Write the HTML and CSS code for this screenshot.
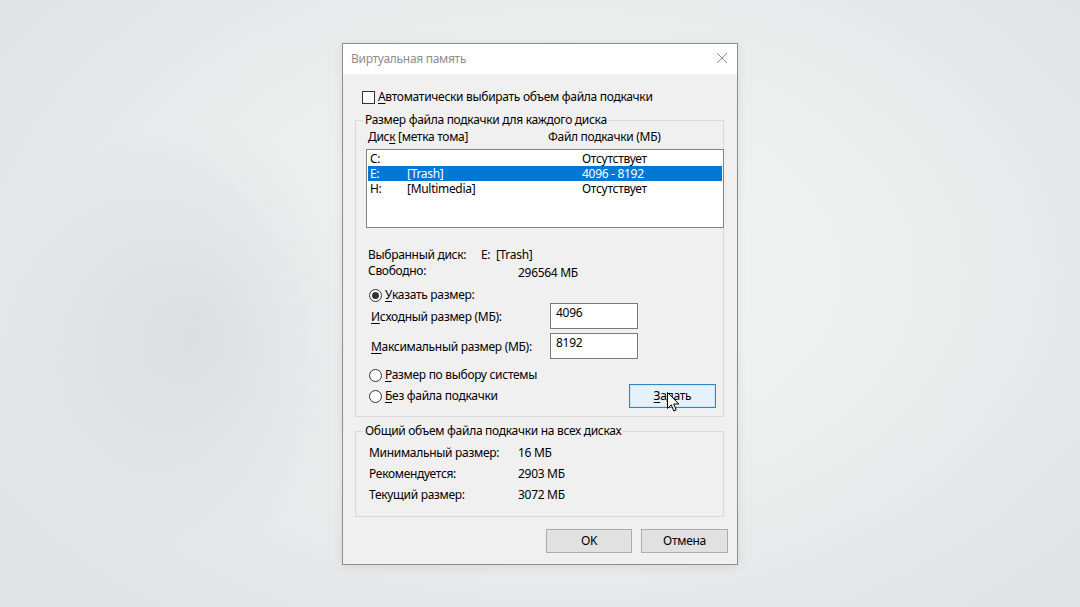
FILE: index.html
```html
<!DOCTYPE html>
<html lang="ru">
<head>
<meta charset="utf-8">
<title>Виртуальная память</title>
<link rel="stylesheet" href="styles.css">
</head>
<body>
<div class="stage">
  <div class="dialog">
    <div class="titlebar">
      <span class="title">Виртуальная память</span>
      <svg class="close" width="12" height="12" viewBox="0 0 12 12"><path d="M1 1 L11 11 M11 1 L1 11" stroke="#8c8c8c" stroke-width="1" fill="none"/></svg>
    </div>
    <div class="body">
      <div class="check-row">
        <span class="checkbox"></span>
        <span class="label"><u>А</u>втоматически выбирать объем файла подкачки</span>
      </div>

      <fieldset class="group group-disk">
        <legend>Размер файла подкачки для каждого диска</legend>
        <div class="col-head">
          <span class="ch1">Дис<u>к</u> [метка тома]</span>
          <span class="ch2">Файл подкачки (МБ)</span>
        </div>
        <div class="listbox">
          <div class="lrow"><span class="c1">C:</span><span class="c2"></span><span class="c3">Отсутствует</span></div>
          <div class="lrow sel"><span class="c1">E:</span><span class="c2">[Trash]</span><span class="c3">4096 - 8192</span></div>
          <div class="lrow"><span class="c1">H:</span><span class="c2">[Multimedia]</span><span class="c3">Отсутствует</span></div>
        </div>
        <div class="info info1">
          <span class="ilabel w1">Выбранный диск:</span><span>E:&nbsp; [Trash]</span>
        </div>
        <div class="info info2">
          <span class="ilabel w2">Свободно:</span><span class="free">296564 МБ</span>
        </div>
        <div class="radio-row r-custom">
          <span class="radio on"></span><span><u>У</u>казать размер:</span>
        </div>
        <div class="field-row f1">
          <span class="flabel"><u>И</u>сходный размер (МБ):</span>
          <div class="input">4096</div>
        </div>
        <div class="field-row f2">
          <span class="flabel"><u>М</u>аксимальный размер (МБ):</span>
          <div class="input">8192</div>
        </div>
        <div class="radio-row r-system">
          <span class="radio"></span><span><u>Р</u>азмер по выбору системы</span>
        </div>
        <div class="last-row">
          <div class="radio-row">
            <span class="radio"></span><span><u>Б</u>ез файла подкачки</span>
          </div>
          <div class="btn btn-set"><u>З</u>адать
            <svg class="cursor" width="13" height="21" viewBox="0 0 13 21"><path d="M0.5 0.5 L0.5 16.5 L4.3 12.8 L6.8 19 L9.2 18 L6.7 12 L11.8 12 Z" fill="#fff" stroke="#000" stroke-width="1" stroke-linejoin="miter"/></svg>
          </div>
        </div>
      </fieldset>

      <fieldset class="group group-total">
        <legend>Общий объем файла подкачки на всех дисках</legend>
        <div class="trow"><span class="tlabel">Минимальный размер:</span><span>16 МБ</span></div>
        <div class="trow"><span class="tlabel">Рекомендуется:</span><span>2903 МБ</span></div>
        <div class="trow"><span class="tlabel">Текущий размер:</span><span>3072 МБ</span></div>
      </fieldset>

      <div class="buttons">
        <div class="btn btn-ok">OK</div>
        <div class="btn btn-cancel">Отмена</div>
      </div>
    </div>
  </div>
</div>
</body>
</html>
```

FILE: styles.css
```css
html, body {
  margin: 0;
  padding: 0;
}
body {
  width: 1080px;
  height: 607px;
  overflow: hidden;
  background:
    radial-gradient(ellipse 18% 35% at 18% 55%, rgba(200,203,205,0.45) 0%, rgba(200,203,205,0) 100%),
    radial-gradient(ellipse 60% 70% at 52% 45%, #f5f6f6 0%, #eef0f0 45%, #e2e4e5 100%);
  font-family: "Noto Sans", "Open Sans", sans-serif;
  font-size: 12px;
  letter-spacing: -0.3px;
  color: #000;
}
.stage {
  display: flex;
  justify-content: center;
  padding-top: 43px;
}
.dialog {
  width: 394px;
  border: 1px solid #8d8d8d;
  background: #f0f0f0;
  box-shadow: 0 2px 10px rgba(0,0,0,0.08);
}
.titlebar {
  height: 30px;
  background: #fff;
  display: flex;
  align-items: center;
  justify-content: space-between;
  padding: 0 9px 0 8px;
}
.title {
  color: #8e8e8e;
  line-height: 16px;
}
.close {
  display: block;
  margin-top: -2px;
}
.body {
  height: 490px;
  box-sizing: border-box;
  padding: 15px 0 11px 0;
  display: flex;
  flex-direction: column;
}
u {
  text-decoration: underline;
  text-underline-offset: 2px;
  text-decoration-thickness: 1px;
}
.check-row {
  height: 16px;
  line-height: 16px;
  display: flex;
  align-items: center;
  padding-left: 19px;
}
.checkbox {
  width: 11px;
  height: 11px;
  border: 1px solid #333;
  background: #fff;
  margin-right: 3px;
}
.group {
  margin: 7px 0 0 12px;
  padding: 0;
  width: 369px;
  box-sizing: border-box;
  border: 1px solid #d9d9d9;
  min-width: 0;
}
.group legend {
  margin-left: 7px;
  padding: 0 2px;
  line-height: 16px;
  height: 16px;
}
.group-disk {
  padding-bottom: 8px;
}
.col-head {
  display: flex;
  margin-top: 1px;
  line-height: 16px;
  padding-left: 12px;
}
.ch1 { width: 180px; }
.listbox {
  margin: 4px 0 0 10px;
  width: 358px;
  height: 79px;
  box-sizing: border-box;
  border: 1px solid #828282;
  background: #fff;
  padding: 1px;
}
.lrow {
  display: flex;
  height: 15px;
  line-height: 15px;
}
.lrow .c1 { width: 37px; padding-left: 2px; }
.lrow .c2 { width: 175px; }
.lrow.sel {
  background: #0078d7;
  color: #fff;
}
.info {
  display: flex;
  padding-left: 12px;
  align-items: flex-start;
}
.info1 {
  margin-top: 19px;
  height: 16px;
  line-height: 16px;
}
.info2 {
  height: 15px;
  line-height: 15px;
}
.ilabel.w1 { width: 113px; }
.ilabel.w2 { width: 150px; }
.free { padding-top: 2px; }
.radio-row {
  display: flex;
  align-items: center;
  height: 16px;
  line-height: 16px;
  padding-left: 13px;
}
.radio {
  width: 11px;
  height: 11px;
  border: 1px solid #333;
  border-radius: 50%;
  background: #fff;
  margin-right: 3px;
  display: flex;
  align-items: center;
  justify-content: center;
}
.radio.on::after {
  content: "";
  width: 7px;
  height: 7px;
  border-radius: 50%;
  background: #333;
}
.r-custom { margin-top: 9px; }
.field-row {
  display: flex;
  align-items: center;
  height: 26px;
  padding-left: 15px;
}
.f2 { margin-top: 4px; }
.flabel {
  width: 179px;
  padding-top: 1px;
}
.input {
  width: 88px;
  height: 26px;
  box-sizing: border-box;
  border: 1px solid #7a7a7a;
  background: #fff;
  padding: 1px 5px;
  line-height: 16px;
}
.r-system { margin-top: 8px; }
.last-row {
  margin-top: 1px;
  height: 24px;
  display: flex;
  align-items: center;
  justify-content: space-between;
  padding-right: 7px;
}
.last-row .radio-row { padding-left: 13px; }
.btn {
  height: 24px;
  box-sizing: border-box;
  border: 1px solid #adadad;
  background: #e1e1e1;
  display: flex;
  align-items: center;
  justify-content: center;
  line-height: 16px;
}
.btn-set {
  position: relative;
  width: 87px;
  background: #e5f1fb;
  border: 1px solid #2f86c2;
  box-shadow: inset 0 0 0 1px #cfe6f6;
}
.cursor {
  position: absolute;
  left: 37px;
  top: 7px;
}
.group-total {
  margin-top: 6px;
  padding-bottom: 11px;
}
.trow {
  display: flex;
  height: 21px;
  line-height: 21px;
  padding-left: 13px;
}
.trow:first-of-type { margin-top: 3px; }
.tlabel { width: 149px; }
.buttons {
  margin-top: 12px;
  display: flex;
  justify-content: flex-end;
  gap: 9px;
  padding-right: 9px;
}
.btn-ok { width: 86px; }
.btn-cancel { width: 87px; }
```
